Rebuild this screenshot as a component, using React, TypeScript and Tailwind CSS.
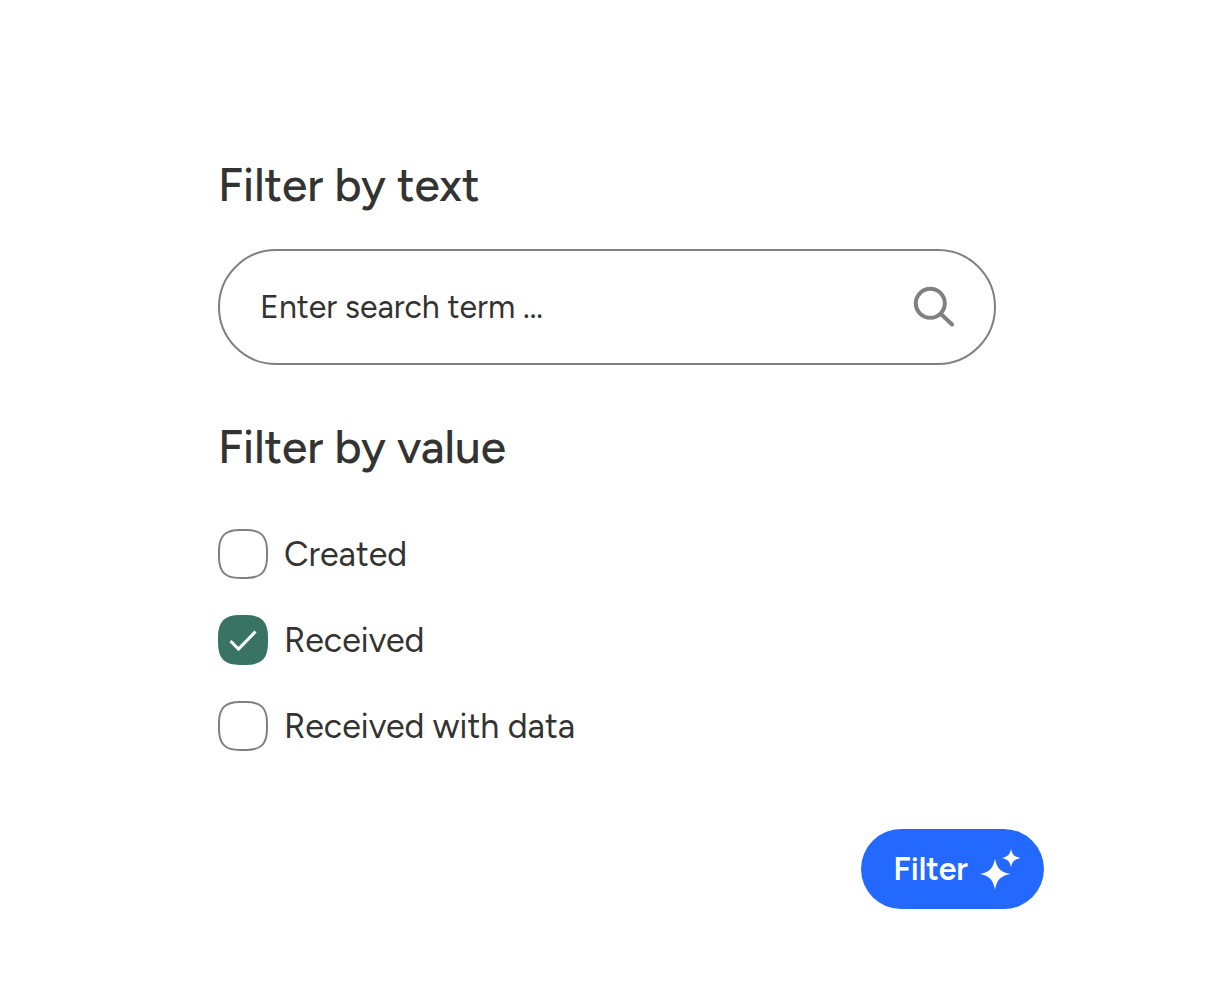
import { useState } from "react";

const options = [
  { id: "created", label: "Created" },
  { id: "received", label: "Received" },
  { id: "received-data", label: "Received with data" },
];

function SearchIcon() {
  return (
    <svg width="42" height="42" viewBox="0 0 42 42" fill="none" stroke="#80807f" strokeWidth="4" aria-hidden="true">
      <circle cx="18.3" cy="17.3" r="14.5" />
      <path d="M29 28L40 38.5" strokeLinecap="round" />
    </svg>
  );
}

function SparkleIcon() {
  return (
    <svg width="42" height="42" viewBox="0 0 42 42" fill="#fff" aria-hidden="true">
      <path d="M15 11C17 20.5 20.5 24 30.5 26C20.5 28 17 31.5 15 41.5C13 31.5 9.5 28 0 26C9.5 24 13 20.5 15 11Z" />
      <path d="M31 1C32.3 6.7 34.3 8.7 40.5 10C34.3 11.3 32.3 13.3 31 19C29.7 13.3 27.7 11.3 22 10C27.7 8.7 29.7 6.7 31 1Z" />
    </svg>
  );
}

function Checkbox({ id, label, checked, onChange }: { id: string; label: string; checked: boolean; onChange: () => void }) {
  return (
    <div className="flex items-center gap-4">
      <div className="grid size-[50px] shrink-0">
        <input
          id={id}
          type="checkbox"
          checked={checked}
          onChange={onChange}
          className="peer col-start-1 row-start-1 size-full cursor-pointer appearance-none rounded-2xl outline-none"
        />
        <svg
          viewBox="0 0 50 50"
          aria-hidden="true"
          className="pointer-events-none col-start-1 row-start-1 size-full fill-white stroke-[#80807f] stroke-2 peer-checked:fill-[#397363] peer-checked:stroke-[#397363]"
        >
          <path d="M22 1H28C43 1 49 7 49 22V28C49 43 43 49 28 49H22C7 49 1 43 1 28V22C1 7 7 1 22 1Z" />
          {checked && <path d="M12.5 26L20.5 34L37.5 16.5" fill="none" stroke="#fff" strokeWidth="3" />}
        </svg>
      </div>
      <label htmlFor={id} className="cursor-pointer pt-0.5 text-[34px] leading-12">
        {label}
      </label>
    </div>
  );
}

export default function App() {
  const [term, setTerm] = useState("");
  const [selected, setSelected] = useState<string[]>(["received"]);

  const toggle = (id: string) => {
    setSelected((prev) => (prev.includes(id) ? prev.filter((s) => s !== id) : [...prev, id]));
  };

  return (
    <main className="min-h-screen bg-white font-[Figtree,Lato,sans-serif] text-[#333331]">
      <form className="mx-auto max-w-[874px] pt-[157px] pb-20" onSubmit={(e) => e.preventDefault()}>
        <div className="px-12">
          <h2 className="text-[46px] leading-14 font-medium">
            <label htmlFor="term">Filter by text</label>
          </h2>
          <div className="mt-9 flex h-[116px] items-center rounded-full border-2 border-[#80807f] px-10">
            <input
              id="term"
              type="text"
              value={term}
              onChange={(e) => setTerm(e.target.value)}
              placeholder="Enter search term ..."
              className="min-w-0 flex-1 bg-transparent text-[32px] outline-none placeholder:text-[#333331]"
            />
            <SearchIcon />
          </div>

          <h2 className="mt-[54px] text-[46px] leading-14 font-medium">Filter by value</h2>
          <div className="mt-[54px] flex flex-col gap-9">
            {options.map((opt) => (
              <Checkbox
                key={opt.id}
                id={opt.id}
                label={opt.label}
                checked={selected.includes(opt.id)}
                onChange={() => toggle(opt.id)}
              />
            ))}
          </div>
        </div>

        <div className="mt-[78px] flex justify-end">
          <button
            type="submit"
            className="flex h-20 cursor-pointer items-center gap-3 rounded-full bg-[#2469ff] pr-[22px] pl-8 text-[32px] font-semibold text-white"
          >
            Filter
            <SparkleIcon />
          </button>
        </div>
      </form>
    </main>
  );
}
